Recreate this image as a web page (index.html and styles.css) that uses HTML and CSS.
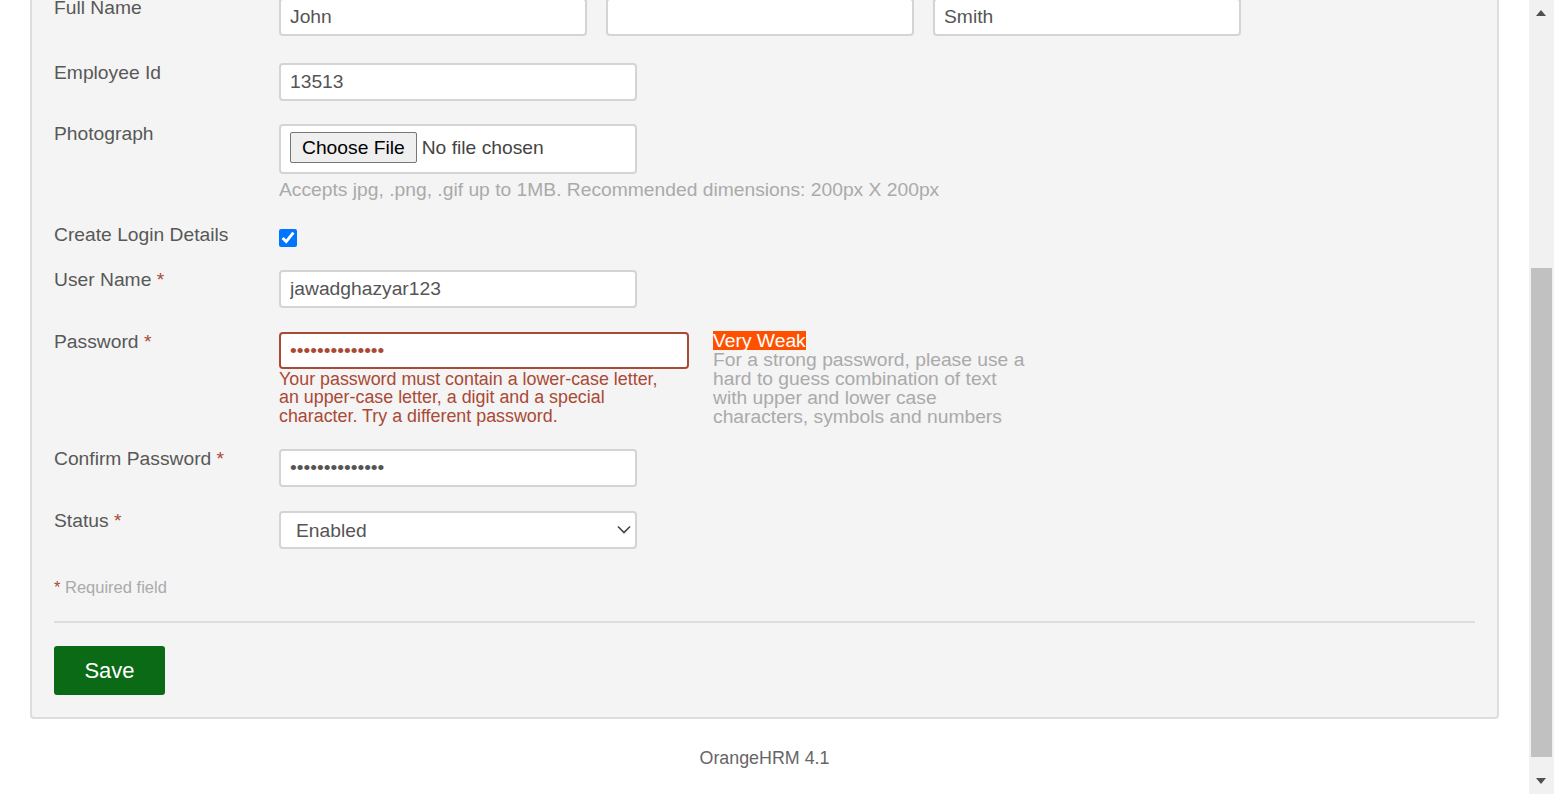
FILE: index.html
```html
<!DOCTYPE html>
<html lang="en">
<head>
<meta charset="utf-8">
<title>Add Employee</title>
<link rel="stylesheet" href="styles.css">
</head>
<body>
<div class="page">
  <div class="panel">
    <form class="form">
      <div class="row row-first">
        <div class="label">Full Name</div>
        <div class="field names">
          <input class="input name" type="text" value="John">
          <input class="input name" type="text" value="">
          <input class="input name" type="text" value="Smith">
        </div>
      </div>
      <div class="row row-tight">
        <div class="label">Employee Id</div>
        <div class="field"><input class="input" type="text" value="13513"></div>
      </div>
      <div class="row">
        <div class="label">Photograph</div>
        <div class="field">
          <div class="filebox"><input class="file" type="file"></div>
          <div class="hint">Accepts jpg, .png, .gif up to 1MB. Recommended dimensions: 200px X 200px</div>
        </div>
      </div>
      <div class="row row-tight">
        <div class="label">Create Login Details</div>
        <div class="field check-field"><input class="check" type="checkbox" checked></div>
      </div>
      <div class="row">
        <div class="label">User Name <span class="req">*</span></div>
        <div class="field"><input class="input" type="text" value="jawadghazyar123"></div>
      </div>
      <div class="row row-tight">
        <div class="label">Password <span class="req">*</span></div>
        <div class="field pass-group">
          <div class="pass-main">
            <input class="input input-error" type="password" value="abcdefghijklmn">
            <div class="error">Your password must contain a lower-case letter, an upper-case letter, a digit and a special character. Try a different password.</div>
          </div>
          <div class="strength">
            <span class="meter">Very Weak</span>
            <div class="strength-help">For a strong password, please use a hard to guess combination of text with upper and lower case characters, symbols and numbers</div>
          </div>
        </div>
      </div>
      <div class="row">
        <div class="label">Confirm Password <span class="req">*</span></div>
        <div class="field"><input class="input" type="password" value="abcdefghijklmn"></div>
      </div>
      <div class="row row-last">
        <div class="label">Status <span class="req">*</span></div>
        <div class="field">
          <div class="select-wrap">
            <select class="select">
              <option>Enabled</option>
              <option>Disabled</option>
            </select>
            <svg class="chevron" width="14" height="9" viewBox="0 0 14 9"><path d="M1 1.5 L7 7.5 L13 1.5" fill="none" stroke="#444" stroke-width="1.6"/></svg>
          </div>
        </div>
      </div>
      <p class="required"><span class="req">*</span> Required field</p>
      <div class="divider"></div>
      <button class="save" type="button">Save</button>
    </form>
  </div>
  <div class="footer">OrangeHRM 4.1</div>
</div>
<div class="scrollbar">
  <div class="arrow arrow-up"></div>
  <div class="thumb"></div>
  <div class="arrow arrow-down"></div>
</div>
</body>
</html>
```
FILE: styles.css
```css
html, body {
  margin: 0;
  padding: 0;
  height: 100%;
  overflow: hidden;
  background: #fff;
}
body {
  font-family: "Liberation Sans", Arial, sans-serif;
  color: #585858;
}
.page {
  width: 1529px;
}
.panel {
  margin: -27px 30px 0 30px;
  padding: 20px 22px 22px 22px;
  background: #f4f4f4;
  border: 2px solid #dddddd;
  border-radius: 4px;
}
.form {
  margin: 0;
}
.row {
  display: flex;
  align-items: flex-start;
  margin-bottom: 21px;
}
.row-first {
  margin-bottom: 24px;
}
.row-tight {
  margin-bottom: 20px;
}
.row-last {
  margin-bottom: 28px;
}
.label {
  width: 225px;
  flex: none;
  padding-top: 2px;
  font-size: 19.25px;
  line-height: 22px;
  color: #585858;
}
.req {
  color: #aa4935;
}
.field {
  margin-top: 3px;
}
.names {
  display: flex;
  gap: 19px;
}
.input {
  box-sizing: border-box;
  width: 358px;
  height: 38px;
  margin: 0;
  padding: 0 9px;
  border: 2px solid #d4d4d4;
  border-radius: 4px;
  background: #fff;
  font-family: "Liberation Sans", Arial, sans-serif;
  font-size: 19.25px;
  color: #555;
  outline: none;
  display: block;
}
.input.name {
  width: 308px;
}
.input-error {
  width: 410px;
  height: 37px;
  border-color: #aa4935;
  color: #aa4935;
}
.filebox {
  box-sizing: border-box;
  width: 358px;
  height: 50px;
  padding: 6px 9px;
  border: 2px solid #d4d4d4;
  border-radius: 4px;
  background: #fff;
}
.file {
  font-family: "Liberation Sans", Arial, sans-serif;
  font-size: 19.25px;
  color: #444;
  width: 330px;
}
.file::file-selector-button {
  font-family: "Liberation Sans", Arial, sans-serif;
  font-size: 19.25px;
  color: #000;
  background: #efefef;
  border: 1px solid #767676;
  border-radius: 2px;
  height: 31px;
  padding: 0 11px;
  margin-right: 5px;
}
.hint {
  margin-top: 5px;
  font-size: 19.25px;
  line-height: 22px;
  color: #aaaaaa;
  white-space: nowrap;
}
.check-field {
  margin-top: 7px;
}
.check {
  width: 18px;
  height: 18px;
  margin: 0;
  display: block;
  accent-color: #0075ff;
}
.pass-group {
  display: flex;
  align-items: flex-start;
  gap: 24px;
}
.pass-main {
  width: 410px;
}
.error {
  width: 390px;
  margin-top: 1px;
  font-size: 17.875px;
  line-height: 18.3px;
  color: #aa4935;
}
.strength {
  width: 318px;
  font-size: 19.25px;
  line-height: 19px;
  margin-top: -1px;
}
.meter {
  display: inline-block;
  height: 19px;
  line-height: 19px;
  background: #ff5000;
  color: #fff;
  vertical-align: top;
}
.strength-help {
  color: #aaaaaa;
}
.select-wrap {
  position: relative;
  width: 358px;
}
.select {
  box-sizing: border-box;
  width: 358px;
  height: 38px;
  margin: 0;
  padding: 0 0 0 15px;
  border: 2px solid #d4d4d4;
  border-radius: 4px;
  background: #fff;
  font-family: "Liberation Sans", Arial, sans-serif;
  font-size: 19.25px;
  color: #555;
  appearance: none;
  -webkit-appearance: none;
  outline: none;
  display: block;
}
.chevron {
  position: absolute;
  right: 6px;
  top: 14px;
  pointer-events: none;
}
.required {
  margin: 0;
  font-size: 16.5px;
  line-height: 20px;
  color: #aaaaaa;
}
.divider {
  height: 2px;
  background: #dddddd;
  margin-top: 24px;
  margin-bottom: 23px;
}
.save {
  display: block;
  width: 111px;
  height: 49px;
  padding: 0;
  border: none;
  border-radius: 3px;
  background: #0b6a15;
  color: #fff;
  font-family: "Liberation Sans", Arial, sans-serif;
  font-size: 22px;
}
.footer {
  margin-top: 29px;
  text-align: center;
  font-size: 17.875px;
  line-height: 21px;
  color: #666;
}
.scrollbar {
  position: fixed;
  top: 0;
  right: 0;
  width: 25px;
  height: 100%;
  background: #f1f1f1;
}
.thumb {
  position: absolute;
  left: 2px;
  right: 2px;
  top: 268px;
  height: 489px;
  background: #c1c1c1;
}
.arrow {
  position: absolute;
  left: 7px;
  width: 0;
  height: 0;
  border-left: 5.5px solid transparent;
  border-right: 5.5px solid transparent;
}
.arrow-up {
  top: 10px;
  border-bottom: 6px solid #505050;
}
.arrow-down {
  bottom: 10px;
  border-top: 6px solid #505050;
}
```
